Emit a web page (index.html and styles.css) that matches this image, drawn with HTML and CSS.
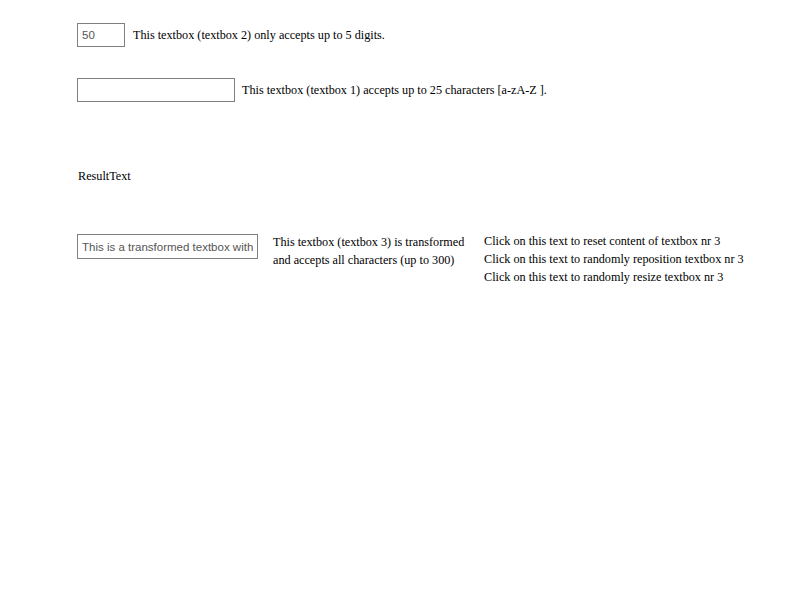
FILE: index.html
```html
<!DOCTYPE html>
<html>
<head>
<meta charset="utf-8">
<link rel="stylesheet" href="styles.css">
</head>
<body>
<div class="page">
  <div class="row row-1">
    <input class="box box-2" type="text" value="50">
    <span class="label label-2">This textbox (textbox 2) only accepts up to 5 digits.</span>
  </div>
  <div class="row row-2">
    <input class="box box-1" type="text" value="">
    <span class="label label-1">This textbox (textbox 1) accepts up to 25 characters [a-zA-Z ].</span>
  </div>
  <div class="result">ResultText</div>
  <div class="row row-3">
    <input class="box box-3" type="text" value="This is a transformed textbox with">
    <div class="desc">This textbox (textbox 3) is transformed<br>and accepts all characters (up to 300)</div>
    <div class="actions">
      <div>Click on this text to reset content of textbox nr 3</div>
      <div>Click on this text to randomly reposition textbox nr 3</div>
      <div>Click on this text to randomly resize textbox nr 3</div>
    </div>
  </div>
</div>
</body>
</html>
```

FILE: styles.css
```css
html, body {
  margin: 0;
  padding: 0;
  background: #fff;
}
body {
  font-family: "Liberation Serif", "Times New Roman", serif;
  font-size: 12.2px;
  line-height: 18px;
  color: #000;
}
.page {
  padding: 23px 0 0 77px;
}
.row {
  display: flex;
  align-items: center;
}
.box {
  box-sizing: border-box;
  margin: 0;
  border: 1px solid #7f7f7f;
  padding: 0 4px;
  font-family: "Liberation Sans", Arial, sans-serif;
  font-size: 11.5px;
  color: #555;
  background: #fff;
  outline: none;
}
.box-2 {
  width: 48px;
  height: 24px;
}
.label-2 {
  margin-left: 8px;
}
.row-2 {
  margin-top: 31px;
}
.box-1 {
  width: 158px;
  height: 24px;
}
.label-1 {
  margin-left: 7px;
}
.result {
  margin-top: 65px;
  padding-left: 1px;
}
.row-3 {
  margin-top: 49px;
  align-items: flex-start;
}
.box-3 {
  width: 181px;
  height: 25px;
}
.desc {
  margin-left: 15px;
  margin-top: -1px;
  width: 196px;
}
.actions {
  margin-left: 15px;
  margin-top: -2px;
}
```
